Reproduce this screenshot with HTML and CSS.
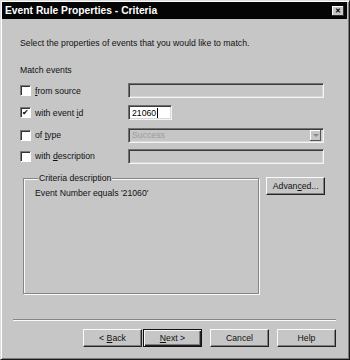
FILE: index.html
```html
<!DOCTYPE html>
<html lang="en">
<head>
    <meta charset="UTF-8">
    <title>Event Rule Properties - Criteria</title>
    <link rel="stylesheet" href="styles.css">
</head>
<body>
    <div class="dialog">
        <div class="titlebar">
            <span class="title">Event Rule Properties - Criteria</span>
            <span class="close">&#x2715;</span>
        </div>

        <div class="content">
            <p class="intro">Select the properties of events that you would like to match.</p>
            <p class="section">Match events</p>

            <div class="rows">
                <label class="check"><span class="box"></span><span><u>f</u>rom source</span></label>
                <div class="field disabled"></div>

                <label class="check"><span class="box checked">&#x2714;</span><span>with event <u>i</u>d</span></label>
                <div class="field short">21060<span class="caret"></span></div>

                <label class="check"><span class="box"></span><span>of <u>t</u>ype</span></label>
                <div class="field disabled select">
                    <span class="muted">Success</span>
                    <span class="arrow"></span>
                </div>

                <label class="check"><span class="box"></span><span>with <u>d</u>escription</span></label>
                <div class="field disabled"></div>
            </div>

            <div class="criteria">
                <fieldset class="group">
                    <legend>Criteria description</legend>
                    <p class="desc">Event Number equals '21060'</p>
                </fieldset>
                <button class="btn advanced">Advan<u>c</u>ed...</button>
            </div>
        </div>

        <div class="separator"></div>

        <div class="buttons">
            <button class="btn">&lt; <u>B</u>ack</button>
            <button class="btn default"><u>N</u>ext &gt;</button>
            <button class="btn spaced">Cancel</button>
            <button class="btn spaced">Help</button>
        </div>
    </div>
</body>
</html>
```

FILE: styles.css
```css
body {
    margin: 0;
    background: #c6c6c6;
    font-family: 'Liberation Sans', Arial, sans-serif;
    font-size: 8.7px;
    color: #111;
}
.dialog {
    width: 350px;
    height: 360px;
    box-sizing: border-box;
    background: #c6c6c6;
    border: 1px solid;
    border-color: #dcdcdc #1a1a1a #1a1a1a #dcdcdc;
    box-shadow: inset 1px 1px #fff, inset -1px -1px #7c7c7c;
    padding: 1px 2px 2px 1px;
    display: flex;
    flex-direction: column;
}
.titlebar {
    height: 17px;
    background: #050505;
    display: flex;
    align-items: center;
    justify-content: space-between;
    padding: 0 3px 0 3px;
}
.title {
    color: #fff;
    font-weight: bold;
    font-size: 10.3px;
}
.close {
    width: 12px;
    height: 10px;
    background: #c6c6c6;
    box-shadow: inset -1px -1px #303030, inset 1px 1px #fff;
    font-size: 7px;
    font-weight: bold;
    line-height: 10px;
    text-align: center;
    color: #000;
}
.content {
    padding: 0 22px 0 18px;
}
p {
    margin: 0;
    line-height: 12px;
}
.intro {
    margin-top: 18px;
}
.section {
    margin-top: 15px;
}
.rows {
    margin-top: 4px;
    display: grid;
    grid-template-columns: 108px 196px;
    grid-template-rows: 21px 23px 22px 20px;
    align-items: center;
}
.check {
    display: flex;
    align-items: center;
    gap: 4px;
}
.box {
    width: 9px;
    height: 9px;
    background: #fff;
    border: 1px solid;
    border-color: #7a7a7a #fff #fff #7a7a7a;
    box-shadow: inset 1px 1px #333;
    font-size: 8px;
    line-height: 9px;
    text-align: center;
    color: #000;
}
.field {
    height: 15px;
    box-sizing: border-box;
    border: 1px solid;
    border-color: #707070 #f4f4f4 #f4f4f4 #707070;
    box-shadow: inset 1px 1px #3a3a3a, inset -1px -1px #d8d8d8;
    background: #fff;
    display: flex;
    align-items: center;
    padding: 0 3px;
}
.field.disabled {
    background: #c6c6c6;
}
.field.short {
    width: 44px;
    color: #000;
}
.caret {
    width: 1px;
    height: 10px;
    background: #000;
    margin-left: 1px;
}
.select {
    justify-content: space-between;
    padding-right: 2px;
}
.muted {
    color: #9c9c9c;
}
.arrow {
    width: 11px;
    height: 11px;
    background: #c6c6c6;
    box-shadow: inset -1px -1px #555, inset 1px 1px #fff;
    position: relative;
}
.arrow::after {
    content: "";
    position: absolute;
    left: 3px;
    top: 4px;
    border-left: 3px solid transparent;
    border-right: 3px solid transparent;
    border-top: 3px solid #8a8a8a;
}
.criteria {
    margin-top: 6px;
    display: flex;
    align-items: flex-start;
    gap: 7px;
    margin-left: 3px;
}
.group {
    margin: 0;
    width: 238px;
    height: 122px;
    box-sizing: border-box;
    padding: 3px 10px;
    border: 1px solid #858585;
    box-shadow: inset 1px 1px #fafafa, 1px 1px #fafafa;
}
.group legend {
    padding: 0 1px;
    margin-left: 4px;
    line-height: 12px;
    background: #c6c6c6;
}
.desc {
    margin-left: 1px;
}
.btn {
    font-family: 'Liberation Sans', Arial, sans-serif;
    font-size: 8.7px;
    color: #111;
    width: 59px;
    height: 18px;
    padding: 0;
    background: #c6c6c6;
    border: 1px solid;
    border-color: #fafafa #222 #222 #fafafa;
    box-shadow: inset -1px -1px #808080;
}
.advanced {
    margin-top: 5px;
}
.btn.default {
    border-color: #111;
    box-shadow: inset 1px 1px #fafafa, inset -1px -1px #222, inset -2px -2px #808080;
}
.separator {
    margin: 25px 11px 0 11px;
    height: 1px;
    background: #858585;
    border-bottom: 1px solid #fafafa;
}
.buttons {
    margin-top: 8px;
    display: flex;
    justify-content: flex-end;
    padding-right: 11px;
    gap: 1px;
}
.btn.spaced {
    margin-left: 7px;
}
u {
    text-decoration-thickness: 1px;
}
```
